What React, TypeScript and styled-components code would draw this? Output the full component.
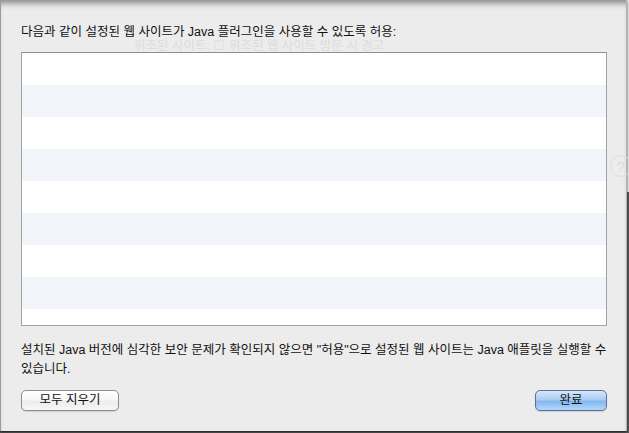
import React from "react";
import styled, { createGlobalStyle } from "styled-components";

const GlobalStyle = createGlobalStyle`
  html, body {
    margin: 0;
    padding: 0;
    background: #d6d6d6;
  }
  body {
    font-family: "Liberation Sans", "Noto Sans CJK KR", sans-serif;
    -webkit-font-smoothing: antialiased;
  }
`;

const Backdrop = styled.div`
  position: relative;
  width: 629px;
  height: 433px;
  overflow: hidden;
  background: linear-gradient(to bottom, #e8e8e8 0, #e8e8e8 192px, #5a5a5a 192px);
`;

const Sheet = styled.div`
  position: relative;
  box-sizing: border-box;
  width: 627px;
  height: 431px;
  background: #ececec;
  border-left: 1px solid #9c9c9c;
  border-right: 1px solid #b4b4b4;
  box-shadow: inset 0 7px 6px -4px rgba(0, 0, 0, 0.45), 0 1px 2px rgba(0, 0, 0, 0.7);
  padding: 24px 20px 20px 20px;
  display: flex;
  flex-direction: column;
`;

/* faint content of the window behind the sheet */
const Ghost = styled.div`
  position: absolute;
  left: 133px;
  top: 42px;
  color: #dcdcdc;
  font-size: 12.5px;
  line-height: 8px;
  white-space: nowrap;
`;

const GhostHelp = styled.div`
  position: absolute;
  left: 609px;
  top: 155px;
  width: 20px;
  height: 20px;
  border-radius: 50%;
  border: 1px solid #e0e0e0;
  color: #dcdcdc;
  font-size: 15px;
  display: flex;
  align-items: center;
  justify-content: center;
`;

const Title = styled.div`
  position: relative;
  font-size: 12.5px;
  line-height: 16px;
  color: #111;
  margin-bottom: 12px;
  white-space: nowrap;
`;

const List = styled.div`
  position: relative;
  box-sizing: border-box;
  width: 586px;
  height: 274px;
  border: 1px solid #a3a3a3;
  border-top-color: #8f8f8f;
  background: #fff;
  overflow: hidden;
  display: flex;
  flex-direction: column;
`;

const Row = styled.div<{ $striped: boolean }>`
  flex: 0 0 32px;
  background: ${(p) => (p.$striped ? "#f2f5fa" : "#ffffff")};
`;

const Note = styled.div`
  margin-top: 15px;
  font-size: 12.5px;
  line-height: 19px;
  color: #111;
  white-space: nowrap;
`;

const Footer = styled.div`
  margin-top: auto;
  display: flex;
  justify-content: space-between;
  width: 586px;
`;

const Button = styled.button<{ $primary?: boolean }>`
  box-sizing: border-box;
  height: 21px;
  padding: 0;
  border-radius: 5px;
  font-family: "Liberation Sans", "Noto Sans CJK KR", sans-serif;
  font-size: 12.5px;
  line-height: 19px;
  color: #111;
  border: 1px solid ${(p) => (p.$primary ? "#5a6f9c" : "#8e8e8e")};
  background: ${(p) =>
    p.$primary
      ? "linear-gradient(to bottom, #d6e6f8 0%, #a9cdf3 45%, #84b8ef 55%, #b3d8fb 100%)"
      : "linear-gradient(to bottom, #ffffff 0%, #f6f6f6 45%, #ececec 55%, #f7f7f7 100%)"};
  box-shadow: 0 1px 1px rgba(0, 0, 0, 0.12);
`;

const rows = Array.from({ length: 9 }, (_, i) => i);

const App: React.FC = () => (
  <>
    <GlobalStyle />
    <Backdrop>
      <Sheet>
        <Ghost>위조된 사이트: ☐ 위조된 웹 사이트 방문 시 경고</Ghost>
        <GhostHelp>?</GhostHelp>
        <Title>다음과 같이 설정된 웹 사이트가 Java 플러그인을 사용할 수 있도록 허용:</Title>
        <List>
          {rows.map((i) => (
            <Row key={i} $striped={i % 2 === 1} />
          ))}
        </List>
        <Note>
          설치된 Java 버전에 심각한 보안 문제가 확인되지 않으면 "허용"으로 설정된 웹 사이트는 Java 애플릿을 실행할 수
          <br />
          있습니다.
        </Note>
        <Footer>
          <Button style={{ width: 98 }}>모두 지우기</Button>
          <Button $primary style={{ width: 72 }}>
            완료
          </Button>
        </Footer>
      </Sheet>
    </Backdrop>
  </>
);

export default App;
